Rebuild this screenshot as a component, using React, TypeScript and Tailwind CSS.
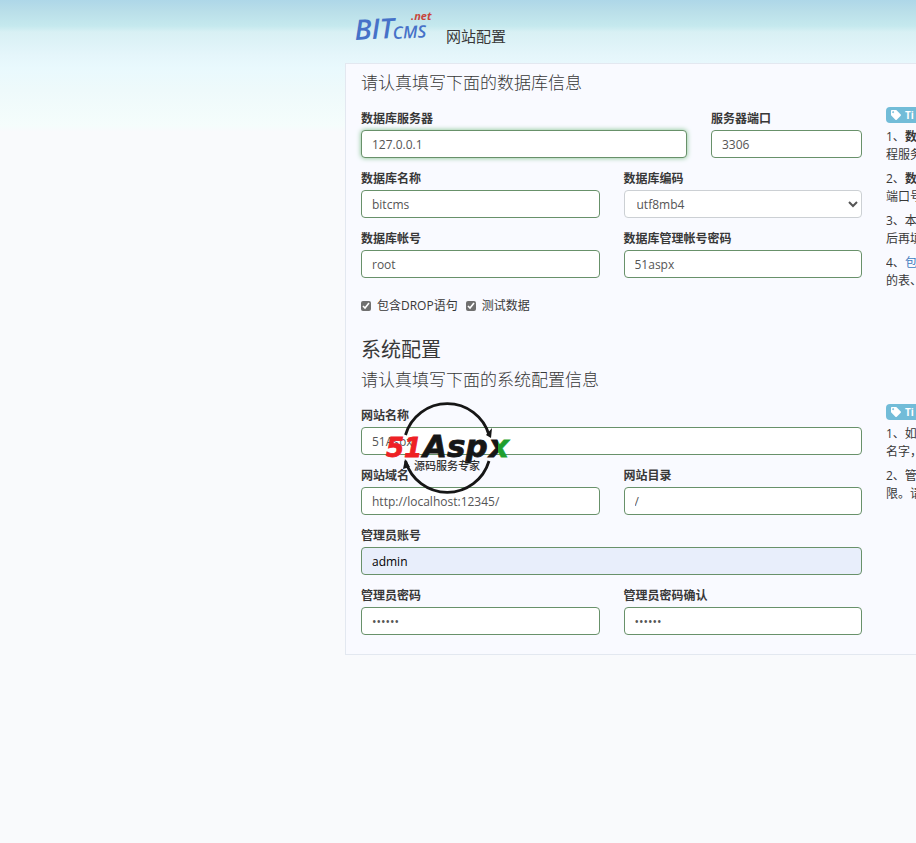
import type { ReactNode } from "react";
import { FaTag } from "react-icons/fa";

type FieldProps = {
  id: string;
  label: string;
  value: string;
  type?: string;
  className?: string;
  inputClassName?: string;
};

function Field({
  id,
  label,
  value,
  type = "text",
  className = "flex-1",
  inputClassName = "bg-white text-[#555]",
}: FieldProps) {
  return (
    <div className={`min-w-0 ${className}`}>
      <label htmlFor={id} className="mb-0.5 block text-[12px] leading-[18px] font-bold">
        {label}
      </label>
      <input
        id={id}
        type={type}
        defaultValue={value}
        className={`block h-7 w-full rounded border border-[#68916a] px-2.5 text-[12px] outline-none ${inputClassName}`}
      />
    </div>
  );
}

function Tips({ children }: { children: ReactNode }) {
  return (
    <aside className="w-[30px] shrink-0 overflow-hidden text-[12px] leading-[18px] whitespace-nowrap">
      <div className="mb-1 flex h-4 items-center gap-1 rounded-l-sm bg-[#72bcd8] pl-[5px] text-[10px] font-bold text-white">
        <FaTag className="size-[10px] shrink-0" />
        <span>Ti</span>
      </div>
      <div className="flex flex-col gap-1.5 pt-px">{children}</div>
    </aside>
  );
}

function BrandLogo() {
  return (
    <svg viewBox="0 0 84 36" className="h-9 w-[84px]" role="img" aria-label="BITcms.net">
      <g
        fontFamily="'Liberation Sans Narrow', 'Open Sans', sans-serif"
        fontStyle="italic"
        fontWeight="600"
        fill="#4672c8"
      >
        <text x="2" y="32" fontSize="28" transform="rotate(-3 2 32)">
          BIT
        </text>
        <text x="40" y="31" fontSize="17" transform="rotate(-3 40 31)">
          CMS
        </text>
      </g>
      <text
        x="58"
        y="12"
        fontSize="11"
        fontWeight="700"
        fontStyle="italic"
        fontFamily="'Open Sans', sans-serif"
        fill="#c8463c"
      >
        .net
      </text>
    </svg>
  );
}

function Watermark() {
  return (
    <svg
      viewBox="0 0 128 94"
      className="pointer-events-none absolute top-[401px] left-[385px] h-[94px] w-32"
      role="img"
      aria-label="51Aspx"
    >
      <defs>
        <linearGradient id="tail" x1="0" x2="1" y1="0" y2="0">
          <stop offset="0.5" stopColor="#161616" />
          <stop offset="0.5" stopColor="#1f9f2f" />
        </linearGradient>
      </defs>
      <g fill="none" stroke="#161616" strokeWidth="2.8">
        <path d="M20.5 34A43.5 43.5 0 0 1 104 34" />
        <path d="M20.5 60A43.5 43.5 0 0 0 104 60" />
      </g>
      <path d="M101 34l6-7-1 10zM18 68l2-10 5 8z" fill="#161616" />
      <g
        fontFamily="'DejaVu Sans', Verdana, sans-serif"
        fontWeight="700"
        fontStyle="italic"
        strokeWidth="0.8"
      >
        <text x="1" y="56" fontSize="26" fill="#ee2024" stroke="#ee2024">
          51
        </text>
        <text x="38" y="56" fontSize="31" fill="#161616" stroke="#161616">
          Asp
        </text>
        <text x="104" y="56" fontSize="31" fill="url(#tail)" stroke="url(#tail)">
          x
        </text>
      </g>
      <text
        x="62"
        y="69"
        fontSize="11"
        fontWeight="500"
        fontFamily="'Noto Sans CJK SC', sans-serif"
        textAnchor="middle"
        fill="#333"
      >
        源码服务专家
      </text>
    </svg>
  );
}

export default function App() {
  return (
    <div className="relative min-h-screen overflow-hidden bg-[#f9fafc] bg-[linear-gradient(#aed7e8_0px,#badfe9_12px,#c5e9ee_26px,#d8f0f4_32px,#e5f6fb_56px,#e9f9fd_68px,#eefafb_90px,#f5fdfc_126px,#f9fafc_132px)] font-['Open_Sans','Noto_Sans_CJK_SC',sans-serif] text-[#383838]">
      <header className="flex h-[63px] items-start pt-2 pl-[353px]">
        <BrandLogo />
        <h1 className="mt-[17px] ml-[9px] text-[15px] leading-[22px]">网站配置</h1>
      </header>

      <main className="ml-[345px] border border-r-0 border-[#e3e8f0] bg-[#f9faff] pt-[7px] pb-[19px] pl-[15px]">
        <section>
          <h2 className="mb-3 text-[17px] leading-6 font-light">请认真填写下面的数据库信息</h2>
          <div className="flex gap-6">
            <div className="flex min-w-0 flex-1 flex-col gap-3 pt-[3px]">
              <div className="flex gap-6">
                <Field
                  id="db-host"
                  label="数据库服务器"
                  value="127.0.0.1"
                  inputClassName="bg-white text-[#555] shadow-[0_0_5px_#7fc08a]"
                />
                <Field id="db-port" label="服务器端口" value="3306" className="w-[151px]" />
              </div>
              <div className="flex gap-6">
                <Field id="db-name" label="数据库名称" value="bitcms" />
                <div className="min-w-0 flex-1">
                  <label htmlFor="db-charset" className="mb-0.5 block text-[12px] leading-[18px] font-bold">
                    数据库编码
                  </label>
                  <select
                    id="db-charset"
                    className="block h-7 w-full rounded border border-[#ccd0d4] bg-white pl-2 text-[12px] text-[#555]"
                  >
                    <option>utf8mb4</option>
                  </select>
                </div>
              </div>
              <div className="flex gap-6">
                <Field id="db-user" label="数据库帐号" value="root" />
                <Field id="db-password" label="数据库管理帐号密码" value="51aspx" />
              </div>
              <div className="mt-[7px] flex gap-2 text-[12px] leading-[18px]">
                <label className="flex items-center gap-1.5">
                  <input type="checkbox" defaultChecked className="size-[10px] accent-[#707070]" />
                  <span>包含DROP语句</span>
                </label>
                <label className="flex items-center gap-1.5">
                  <input type="checkbox" defaultChecked className="size-[10px] accent-[#707070]" />
                  <span>测试数据</span>
                </label>
              </div>
            </div>
            <Tips>
              <p>
                1、<b>数</b>
                <br />
                程服务
              </p>
              <p>
                2、<b>数</b>
                <br />
                端口号
              </p>
              <p>
                3、本
                <br />
                后再填
              </p>
              <p>
                4、<span className="text-[#3f7cc0]">包</span>
                <br />
                的表、
              </p>
            </Tips>
          </div>
        </section>

        <section className="mt-[23px]">
          <h2 className="mb-1.5 text-[20px] leading-6">系统配置</h2>
          <h3 className="mb-3 text-[17px] leading-6 font-light">请认真填写下面的系统配置信息</h3>
          <div className="flex gap-6">
            <div className="flex min-w-0 flex-1 flex-col gap-3 pt-[3px]">
              <Field id="site-name" label="网站名称" value="51Aspx" className="w-full" />
              <div className="flex gap-6">
                <Field id="site-domain" label="网站域名" value="http://localhost:12345/" />
                <Field id="site-path" label="网站目录" value="/" />
              </div>
              <Field
                id="admin-name"
                label="管理员账号"
                value="admin"
                className="w-full"
                inputClassName="bg-[#e8eefb] text-black"
              />
              <div className="flex gap-6">
                <Field id="admin-password" label="管理员密码" value="123456" type="password" />
                <Field id="admin-confirm" label="管理员密码确认" value="123456" type="password" />
              </div>
            </div>
            <Tips>
              <p>
                1、如
                <br />
                名字，
              </p>
              <p>
                2、管
                <br />
                限。请
              </p>
            </Tips>
          </div>
        </section>
      </main>

      <Watermark />
    </div>
  );
}
